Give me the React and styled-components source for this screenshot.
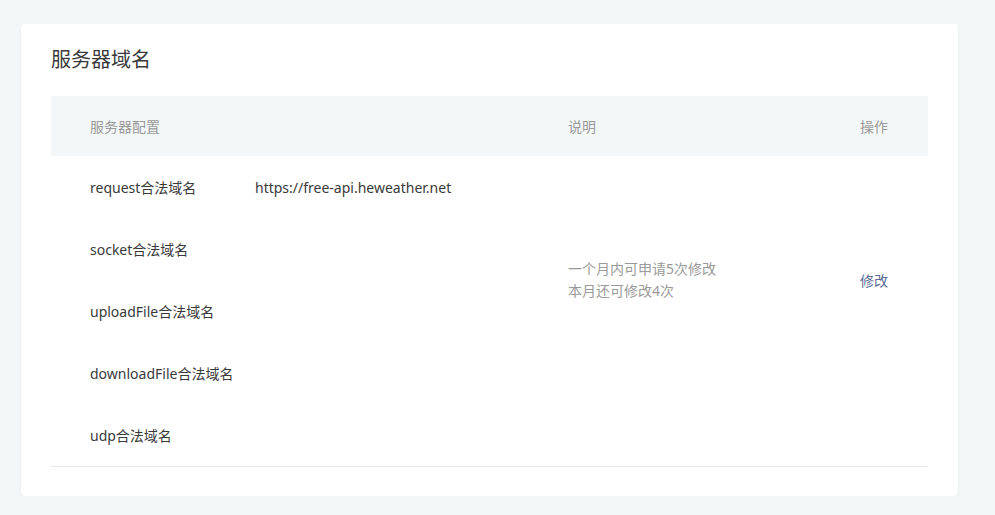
import React from "react";
import styled, { createGlobalStyle } from "styled-components";

const GlobalStyle = createGlobalStyle`
  html, body {
    margin: 0;
    padding: 0;
    background-color: #f3f6f7;
    font-family: "Noto Sans", "Noto Sans CJK SC", sans-serif;
    color: #353535;
  }
`;

const domains = [
  { name: "request合法域名", value: "https://free-api.heweather.net" },
  { name: "socket合法域名", value: "" },
  { name: "uploadFile合法域名", value: "" },
  { name: "downloadFile合法域名", value: "" },
  { name: "udp合法域名", value: "" },
];

const App = () => {
  return (
    <>
      <GlobalStyle />
      <Card>
        <Title>服务器域名</Title>
        <Table>
          <HeadRow>
            <HeadCell $pad="0 0 0 39px">服务器配置</HeadCell>
            <HeadCell>说明</HeadCell>
            <HeadCell $align="right" $pad="0 40px 0 0">操作</HeadCell>
          </HeadRow>
          <Body>
            {domains.map((d, i) => (
              <DomainRow key={d.name} style={{ gridRow: i + 1 }}>
                <DomainName>{d.name}</DomainName>
                <DomainValue>{d.value}</DomainValue>
              </DomainRow>
            ))}
            <Desc>
              <div>一个月内可申请5次修改</div>
              <div>本月还可修改4次</div>
            </Desc>
            <Action href="#">修改</Action>
          </Body>
        </Table>
      </Card>
    </>
  );
};

const Card = styled.div`
  margin: 24px 37px 0 21px;
  padding: 22px 30px 29px;
  background-color: #fff;
  border-radius: 4px;
  box-shadow: 0 1px 2px rgba(0, 0, 0, 0.08);
`;

const Title = styled.h2`
  margin: 0 0 22px;
  font-size: 20px;
  font-weight: 400;
  line-height: 28px;
  color: #3a3a3a;
`;

const Table = styled.div`
  border-bottom: 1px solid #e7e7e7;
`;

const HeadRow = styled.div`
  display: grid;
  grid-template-columns: 517px 292px 1fr;
  height: 60px;
  align-items: center;
  background-color: #f4f7f8;
`;

const HeadCell = styled.div`
  padding: ${(p) => p.$pad || "0"};
  text-align: ${(p) => p.$align || "left"};
  white-space: nowrap;
  font-size: 14px;
  color: #9a9a9a;
`;

const Body = styled.div`
  display: grid;
  grid-template-columns: 517px 292px 1fr;
  grid-template-rows: repeat(5, 62px);
`;

const DomainRow = styled.div`
  grid-column: 1;
  display: flex;
  align-items: center;
  padding-left: 39px;
  font-size: 14px;
  color: #3a3a3a;
`;

const DomainName = styled.span`
  width: 165px;
  flex-shrink: 0;
`;

const DomainValue = styled.span`
  white-space: nowrap;
`;

const Desc = styled.div`
  grid-column: 2;
  grid-row: 1 / 5;
  align-self: center;
  font-size: 14px;
  line-height: 22px;
  color: #9a9a9a;
`;

const Action = styled.a`
  grid-column: 3;
  grid-row: 1 / 5;
  align-self: center;
  justify-self: end;
  margin-right: 40px;
  white-space: nowrap;
  font-size: 14px;
  color: #576b95;
  text-decoration: none;
`;

export default App;
